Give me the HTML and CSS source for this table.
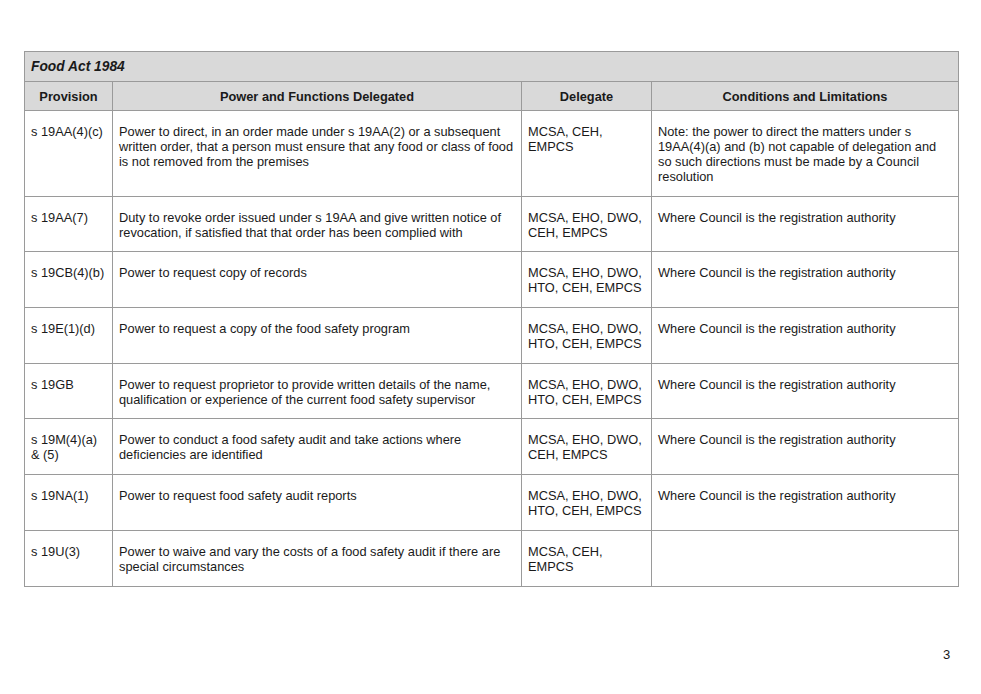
FILE: index.html
```html
<!DOCTYPE html>
<html>
<head>
<meta charset="utf-8">
<link rel="stylesheet" href="styles.css">
</head>
<body>
<div class="page">
  <table class="deleg">
    <colgroup>
      <col class="c1"><col class="c2"><col class="c3"><col class="c4">
    </colgroup>
    <thead>
      <tr class="title-row"><th colspan="4">Food Act 1984</th></tr>
      <tr class="head-row">
        <th>Provision</th>
        <th>Power and Functions Delegated</th>
        <th>Delegate</th>
        <th>Conditions and Limitations</th>
      </tr>
    </thead>
    <tbody>
      <tr>
        <td>s 19AA(4)(c)</td>
        <td>Power to direct, in an order made under s 19AA(2) or a subsequent written order, that a person must ensure that any food or class of food is not removed from the premises</td>
        <td>MCSA, CEH,<br>EMPCS</td>
        <td>Note: the power to direct the matters under s 19AA(4)(a) and (b) not capable of delegation and so such directions must be made by a Council resolution</td>
      </tr>
      <tr>
        <td>s 19AA(7)</td>
        <td>Duty to revoke order issued under s 19AA and give written notice of revocation, if satisfied that that order has been complied with</td>
        <td>MCSA, EHO, DWO, CEH, EMPCS</td>
        <td>Where Council is the registration authority</td>
      </tr>
      <tr>
        <td>s 19CB(4)(b)</td>
        <td>Power to request copy of records</td>
        <td>MCSA, EHO, DWO, HTO, CEH, EMPCS</td>
        <td>Where Council is the registration authority</td>
      </tr>
      <tr>
        <td>s 19E(1)(d)</td>
        <td>Power to request a copy of the food safety program</td>
        <td>MCSA, EHO, DWO, HTO, CEH, EMPCS</td>
        <td>Where Council is the registration authority</td>
      </tr>
      <tr>
        <td>s 19GB</td>
        <td>Power to request proprietor to provide written details of the name, qualification or experience of the current food safety supervisor</td>
        <td>MCSA, EHO, DWO, HTO, CEH, EMPCS</td>
        <td>Where Council is the registration authority</td>
      </tr>
      <tr>
        <td>s 19M(4)(a)<br>&amp; (5)</td>
        <td>Power to conduct a food safety audit and take actions where deficiencies are identified</td>
        <td>MCSA, EHO, DWO, CEH, EMPCS</td>
        <td>Where Council is the registration authority</td>
      </tr>
      <tr>
        <td>s 19NA(1)</td>
        <td>Power to request food safety audit reports</td>
        <td>MCSA, EHO, DWO, HTO, CEH, EMPCS</td>
        <td>Where Council is the registration authority</td>
      </tr>
      <tr>
        <td>s 19U(3)</td>
        <td>Power to waive and vary the costs of a food safety audit if there are special circumstances</td>
        <td>MCSA, CEH,<br>EMPCS</td>
        <td></td>
      </tr>
    </tbody>
  </table>
  <div class="page-num">3</div>
</div>
</body>
</html>
```

FILE: styles.css
```css
html, body {
  margin: 0;
  padding: 0;
  background: #ffffff;
}
body {
  font-family: "Liberation Sans", Arial, sans-serif;
  color: #1a1a1a;
  width: 981px;
  height: 694px;
  overflow: hidden;
}
.page {
  padding: 51px 0 0 24px;
}
.deleg {
  border-collapse: collapse;
  table-layout: fixed;
  width: 934px;
  font-size: 12.8px;
  line-height: 15px;
}
.c1 { width: 88px; }
.c2 { width: 409px; }
.c3 { width: 130px; }
.c4 { width: 307px; }
.deleg th,
.deleg td {
  border: 1px solid #9a9a9a;
  vertical-align: top;
}
.title-row th {
  background: #d9d9d9;
  text-align: left;
  font-style: italic;
  font-weight: bold;
  font-size: 13.8px;
  height: 29px;
  padding: 0 6px;
  vertical-align: middle;
}
.head-row th {
  background: #d9d9d9;
  font-weight: bold;
  text-align: center;
  height: 28px;
  padding: 0 6px;
  vertical-align: middle;
}
.deleg td {
  padding: 13px 6px 11.7px 6px;
}
.page-num {
  margin: 60px 0 0 919px;
  font-size: 13px;
  width: 10px;
}
```
